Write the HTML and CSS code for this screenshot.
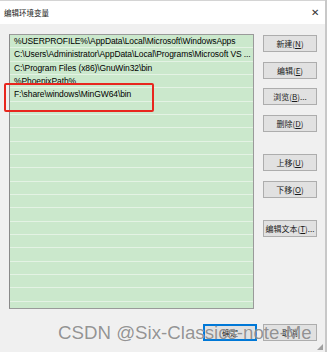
FILE: index.html
```html
<!DOCTYPE html>
<html lang="zh-CN">
<head>
    <meta charset="UTF-8">
    <meta name="viewport" content="width=device-width, initial-scale=1.0">
    <title>编辑环境变量</title>
    <link rel="stylesheet" href="styles.css">
</head>
<body>
    <div class="window">
        <div class="titlebar">
            <span class="title">编辑环境变量</span>
            <span class="close">✕</span>
        </div>
        <div class="content">
            <div class="list">
                <div class="row">%USERPROFILE%\AppData\Local\Microsoft\WindowsApps</div>
                <div class="row">C:\Users\Administrator\AppData\Local\Programs\Microsoft VS ...</div>
                <div class="row">C:\Program Files (x86)\GnuWin32\bin</div>
                <div class="row">%PhoenixPath%</div>
                <div class="row">F:\share\windows\MinGW64\bin</div>
                <div class="row"></div>
                <div class="row"></div>
                <div class="row"></div>
                <div class="row"></div>
                <div class="row"></div>
                <div class="row"></div>
                <div class="row"></div>
                <div class="row"></div>
                <div class="row"></div>
                <div class="row"></div>
                <div class="row"></div>
                <div class="row"></div>
                <div class="row"></div>
                <div class="row"></div>
                <div class="row"></div>
                <div class="row"></div>
            </div>
            <div class="side">
                <div class="group">
                    <button class="btn">新建(<u>N</u>)</button>
                    <button class="btn">编辑(<u>E</u>)</button>
                    <button class="btn">浏览(<u>B</u>)...</button>
                    <button class="btn">删除(<u>D</u>)</button>
                </div>
                <div class="group">
                    <button class="btn">上移(<u>U</u>)</button>
                    <button class="btn">下移(<u>O</u>)</button>
                </div>
                <div class="group">
                    <button class="btn">编辑文本(<u>T</u>)...</button>
                </div>
            </div>
        </div>
        <div class="footer">
            <button class="btn primary">确定</button>
            <button class="btn">取消</button>
        </div>
        <div class="grip"></div>
        <div class="highlight"></div>
        <div class="watermark">CSDN @Six-Classics-note-Me</div>
    </div>
</body>
</html>
```

FILE: styles.css
```css
body {
    margin: 0;
    background-color: #f0f0f0;
    font-family: "Liberation Sans", "Noto Sans CJK SC", sans-serif;
}
.window {
    position: relative;
    width: 325px;
    height: 352px;
    background: #f0f0f0;
    border-right: 2px solid #c8c8c8;
    overflow: hidden;
}
.titlebar {
    height: 23px;
    background: #ffffff;
    border-top: 1px solid #d4d4d4;
    display: flex;
    align-items: center;
    justify-content: space-between;
    padding: 0 6px 0 4px;
}
.title {
    font-family: "Noto Sans CJK SC", sans-serif;
    font-size: 7.5px;
    color: #1a1a1a;
}
.close {
    font-size: 10px;
    color: #333;
}
.content {
    display: flex;
    gap: 9px;
    padding: 10px 0 0 9px;
}
.list {
    width: 243px;
    height: 273px;
    background: #cbe8cc;
    border: 1px solid #9a9a9a;
    border-left-color: #8a8a8a;
    overflow: hidden;
}
.row {
    height: 12.33px;
    border-bottom: 1px solid #e4f2e4;
    padding-left: 4px;
    font-size: 8.5px;
    letter-spacing: -0.1px;
    line-height: 12.33px;
    color: #000;
    white-space: nowrap;
    overflow: hidden;
}
.side {
    display: flex;
    flex-direction: column;
    gap: 22.5px;
    padding-top: 1px;
}
.group {
    display: flex;
    flex-direction: column;
    gap: 9.6px;
}
.btn {
    width: 54px;
    height: 17px;
    padding: 0;
    background: #e1e1e1;
    border: 1px solid #adadad;
    font-family: "Noto Sans CJK SC", sans-serif;
    font-size: 8px;
    color: #1a1a1a;
    display: flex;
    align-items: center;
    justify-content: center;
}
.btn u {
    text-decoration: underline;
}
.footer {
    display: flex;
    justify-content: flex-end;
    gap: 6px;
    padding: 15px 8px 0 0;
}
.btn.primary {
    border: 1px solid #0078d7;
    box-shadow: inset 0 0 0 1px #0078d7;
}
.grip {
    position: absolute;
    right: 2px;
    bottom: 2px;
    width: 6px;
    height: 6px;
    background: radial-gradient(circle, #a0a0a0 0.8px, transparent 1px) 0 0 / 2px 2px;
    clip-path: polygon(100% 0, 100% 100%, 0 100%);
}
.highlight {
    position: absolute;
    left: 4px;
    top: 83px;
    width: 146px;
    height: 25px;
    border: 2px solid #e8261e;
    border-radius: 2px;
}
.watermark {
    position: absolute;
    left: 58px;
    top: 322px;
    font-family: "Liberation Sans", sans-serif;
    font-size: 18.7px;
    color: rgba(120, 120, 120, 0.8);
    text-shadow: 0 0 1px rgba(255, 255, 255, 0.7);
    white-space: nowrap;
}
```
